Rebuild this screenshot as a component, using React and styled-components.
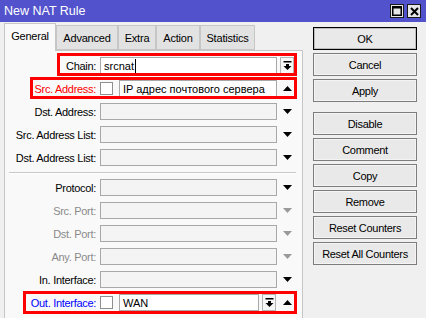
import React from 'react';
import styled, { createGlobalStyle } from 'styled-components';

const GlobalStyle = createGlobalStyle`
  html, body {
    margin: 0;
    padding: 0;
    background: #f0f0f0;
  }
  body {
    font-family: "Liberation Sans", Arial, sans-serif;
    font-size: 11px;
    color: #000;
  }
`

const Window = styled.div`
  width: 426px;
  height: 318px;
  overflow: hidden;
  display: flex;
  flex-direction: column;
  background: #f0f0f0;
`

const TitleBar = styled.div`
  height: 22px;
  flex: none;
  background: #5252cc;
  display: flex;
  align-items: center;
  justify-content: space-between;
  padding: 0 5px 0 4px;
  color: #fff;
`

const Title = styled.span`
  font-size: 12.5px;
`

const TitleButtons = styled.div`
  display: flex;
  gap: 3px;
`

const TitleButton = styled.div`
  width: 14px;
  height: 14px;
  box-sizing: border-box;
  border: 1px solid #1a1a1a;
  background: #e6e6e6;
  display: flex;
  align-items: center;
  justify-content: center;
`

const Body = styled.div`
  display: flex;
  flex: 1;
  min-height: 0;
  padding: 1px 0 0 4px;
  gap: 10px;
`

const LeftColumn = styled.div`
  width: 299px;
  flex: none;
  display: flex;
  flex-direction: column;
`

const Tabs = styled.div`
  display: flex;
  align-items: flex-end;
  height: 27px;
  flex: none;
`

const Tab = styled.div`
  width: ${props => props.$w}px;
  height: ${props => props.$active ? 28 : 25}px;
  box-sizing: border-box;
  margin-bottom: ${props => props.$active ? -1 : 0}px;
  border: 1px solid #c6c6c6;
  border-bottom: ${props => props.$active ? 'none' : '1px solid #c6c6c6'};
  background: ${props => props.$active ? '#f9f9f9' : '#e2e2e2'};
  display: flex;
  align-items: center;
  justify-content: center;
  padding-bottom: ${props => props.$active ? 3 : 0}px;
  position: relative;
  z-index: ${props => props.$active ? 1 : 0};
  letter-spacing: -0.2px;
  white-space: nowrap;
`

const Panel = styled.div`
  flex: 1;
  border: 1px solid #c6c6c6;
  border-bottom: none;
  background: #f9f9f9;
  padding-top: 6px;
`

const Row = styled.div`
  position: relative;
  display: flex;
  align-items: center;
  height: 17px;
  margin-bottom: 6px;
  padding-right: 8px;
`

const Label = styled.div`
  width: 91px;
  flex: none;
  margin-right: 4px;
  text-align: right;
  white-space: nowrap;
  letter-spacing: -0.3px;
  color: ${props => props.$color || '#000'};
`

const Field = styled.div`
  flex: 1;
  height: 17px;
  box-sizing: border-box;
  border: 1px solid #a8a8a8;
  background: ${props => props.$white ? '#fff' : '#f4f4f4'};
  padding: 0 3px;
  display: flex;
  align-items: center;
  white-space: nowrap;
  overflow: hidden;
`

const Caret = styled.span`
  display: inline-block;
  width: 1px;
  height: 14px;
  background: #000;
  margin-left: 1px;
`

const Check = styled.div`
  width: 13px;
  height: 13px;
  flex: none;
  box-sizing: border-box;
  border: 1px solid #8f8f8f;
  background: #fff;
  margin-right: 6px;
`

const ArrowSlot = styled.div`
  width: 14px;
  height: 17px;
  flex: none;
  box-sizing: border-box;
  margin-left: ${props => props.$gap ?? 3}px;
  border: ${props => props.$boxed ? '1px solid #b4b4b4' : 'none'};
  background: ${props => props.$boxed ? '#f6f6f6' : 'transparent'};
  display: flex;
  align-items: center;
  justify-content: center;
  color: ${props => props.$muted ? '#9a9a9a' : '#000'};
`

const Highlight = styled.div`
  position: absolute;
  left: ${props => props.$left}px;
  top: ${props => props.$top}px;
  right: 5px;
  height: ${props => props.$h}px;
  box-sizing: border-box;
  border: 3px solid #ff0000;
  pointer-events: none;
`

const Separator = styled.div`
  height: 0;
  border-top: 1px solid #c8c8c8;
  border-bottom: 1px solid #fff;
  margin: 1px 6px 5px 4px;
`

const ButtonColumn = styled.div`
  width: 104px;
  flex: none;
  display: flex;
  flex-direction: column;
  padding-top: 4px;
`

const Button = styled.div`
  height: 23px;
  box-sizing: border-box;
  border: 1px solid ${props => props.$default ? '#000' : '#7d7d7d'};
  box-shadow: inset 0 0 0 1px ${props => props.$default ? '#bdbdbd' : '#f4f4f4'};
  background: #e9e9e9;
  display: flex;
  align-items: center;
  justify-content: center;
  margin-bottom: ${props => props.$spaced ? 10 : 3}px;
  letter-spacing: -0.3px;
  white-space: nowrap;
`

const Down = () => (
  <svg width="9" height="5" viewBox="0 0 9 5"><path d="M0 0h9L4.5 5z" fill="currentColor" /></svg>
)

const Up = () => (
  <svg width="9" height="5" viewBox="0 0 9 5"><path d="M0 5h9L4.5 0z" fill="currentColor" /></svg>
)

const DownBar = () => (
  <svg width="9" height="9" viewBox="0 0 9 9">
    <rect x="0.5" y="0" width="8" height="1.5" fill="#000" />
    <path d="M3 3h3v2h2.5L4.5 9 0.5 5H3z" fill="#000" />
  </svg>
)

const tabs = [
  { title: 'General', w: 52, active: true },
  { title: 'Advanced', w: 62 },
  { title: 'Extra', w: 38 },
  { title: 'Action', w: 44 },
  { title: 'Statistics', w: 55 },
]

const plainRows = [
  { label: 'Dst. Address:' },
  { label: 'Src. Address List:' },
  { label: 'Dst. Address List:' },
]

const portRows = [
  { label: 'Protocol:' },
  { label: 'Src. Port:', muted: true },
  { label: 'Dst. Port:', muted: true },
  { label: 'Any. Port:', muted: true },
  { label: 'In. Interface:' },
]

const buttons = ['OK', 'Cancel', 'Apply', 'Disable', 'Comment', 'Copy', 'Remove', 'Reset Counters', 'Reset All Counters']

const App = () => {
  return (
    <Window>
      <GlobalStyle />
      <TitleBar>
        <Title>New NAT Rule</Title>
        <TitleButtons>
          <TitleButton>
            <svg width="10" height="10" viewBox="0 0 10 10">
              <rect x="0.75" y="0.75" width="8.5" height="8.5" fill="none" stroke="#000" strokeWidth="1.5" />
              <rect x="0" y="0" width="10" height="2.5" fill="#000" />
            </svg>
          </TitleButton>
          <TitleButton>
            <svg width="9" height="9" viewBox="0 0 9 9">
              <path d="M1 1l7 7M8 1L1 8" stroke="#000" strokeWidth="2" />
            </svg>
          </TitleButton>
        </TitleButtons>
      </TitleBar>

      <Body>
        <LeftColumn>
          <Tabs>
            {tabs.map(tab => (
              <Tab key={tab.title} $w={tab.w} $active={tab.active}>{tab.title}</Tab>
            ))}
          </Tabs>
          <Panel>
            <Row>
              <Label>Chain:</Label>
              <Field $white>srcnat<Caret /></Field>
              <ArrowSlot $boxed><DownBar /></ArrowSlot>
              <Highlight $left={52} $top={-4} $h={23} />
            </Row>
            <Row>
              <Label $color="#ff0000">Src. Address:</Label>
              <Check />
              <Field $white>IP адрес почтового сервера</Field>
              <ArrowSlot><Up /></ArrowSlot>
              <Highlight $left={25} $top={-3} $h={22} />
            </Row>
            {plainRows.map(row => (
              <Row key={row.label}>
                <Label>{row.label}</Label>
                <Field />
                <ArrowSlot><Down /></ArrowSlot>
              </Row>
            ))}
            <Separator />
            {portRows.map(row => (
              <Row key={row.label}>
                <Label $color={row.muted ? '#8a8a8a' : '#000'}>{row.label}</Label>
                <Field />
                <ArrowSlot $muted={row.muted}><Down /></ArrowSlot>
              </Row>
            ))}
            <Row>
              <Label $color="#0000ff">Out. Interface:</Label>
              <Check />
              <Field $white>WAN</Field>
              <ArrowSlot $boxed><DownBar /></ArrowSlot>
              <ArrowSlot $gap={4}><Up /></ArrowSlot>
              <Highlight $left={18} $top={-3} $h={23} />
            </Row>
          </Panel>
        </LeftColumn>

        <ButtonColumn>
          {buttons.map(label => (
            <Button key={label} $default={label === 'OK'} $spaced={label === 'Apply'}>{label}</Button>
          ))}
        </ButtonColumn>
      </Body>
    </Window>
  );
}

export default App;
